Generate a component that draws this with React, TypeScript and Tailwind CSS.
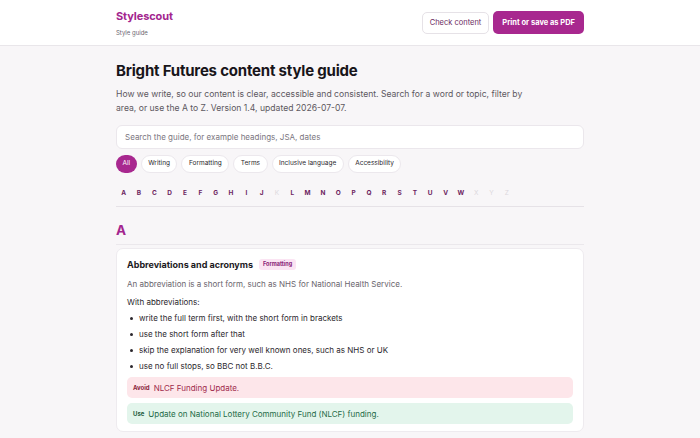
const FILTERS = ['All', 'Writing', 'Formatting', 'Terms', 'Inclusive language', 'Accessibility']
const LETTERS = 'ABCDEFGHIJKLMNOPQRSTUVWXYZ'.split('')
const EMPTY = ['K', 'X', 'Y', 'Z']

const RULES = [
  'write the full term first, with the short form in brackets',
  'use the short form after that',
  'skip the explanation for very well known ones, such as NHS or UK',
  'use no full stops, so BBC not B.B.C.',
]

export default function App() {
  return (
    <div className="min-h-[438px] bg-[#f8f6f8] text-[#1d1a1e]" style={{ fontFamily: 'Inter, "Noto Sans", sans-serif' }}>
      {/* Header */}
      <header className="bg-white border-b border-[#e9e6ea]">
        <div className="max-w-[468px] mx-auto h-[45px] flex items-center justify-between">
          <div className="flex flex-col">
            <span className="text-[11px] leading-[15px] font-bold text-[#a3258e] tracking-[-0.1px]">Stylescout</span>
            <span className="text-[6px] leading-[9px] text-[#6b6670] mt-[4px]">Style guide</span>
          </div>
          <div className="flex items-center gap-[4px]">
            <button className="h-[22px] px-[7px] rounded-[5px] bg-white border border-[#e6e2e7] text-[7.5px] text-[#6a2a5e]">
              Check content
            </button>
            <button className="h-[23px] px-[9px] rounded-[5px] bg-[#a8288f] text-[7.5px] font-bold text-white">
              Print or save as PDF
            </button>
          </div>
        </div>
      </header>

      <main className="max-w-[468px] mx-auto pt-[14px]">
        <h1 className="text-[15px] leading-[22px] font-bold text-[#18151a] tracking-[-0.2px]">
          Bright Futures content style guide
        </h1>
        <p className="mt-[5px] max-w-[412px] text-[8.6px] leading-[14px] text-[#5d5860]">
          How we write, so our content is clear, accessible and consistent. Search for a word or topic, filter by
          area, or use the A to Z. Version 1.4, updated 2026-07-07.
        </p>

        {/* Search */}
        <div className="mt-[10px] h-[24px] rounded-[6px] bg-white border border-[#ebe7ec] flex items-center px-[8px]">
          <span className="text-[8px] text-[#7b7680]">Search the guide, for example headings, JSA, dates</span>
        </div>

        {/* Filters */}
        <div className="mt-[6px] flex gap-[4px]">
          {FILTERS.map((f, i) => (
            <span
              key={f}
              className={`h-[18px] px-[6.5px] rounded-full flex items-center text-[6.5px] ${
                i === 0 ? 'bg-[#a8288f] text-white' : 'bg-white border border-[#ece8ed] text-[#2b272d]'
              }`}
            >
              {f}
            </span>
          ))}
        </div>

        {/* A to Z */}
        <div className="mt-[16px] flex pb-[7px] border-b border-[#e6e2e7]">
          {LETTERS.map((l) => (
            <span
              key={l}
              className={`w-[15.33px] text-center text-[6.5px] font-bold ${
                EMPTY.includes(l) ? 'text-[#dcd8dd] font-normal' : 'text-[#6d1f5f]'
              }`}
            >
              {l}
            </span>
          ))}
        </div>

        {/* Section A */}
        <h2 className="mt-[14px] text-[13.5px] leading-[18px] font-bold text-[#a3258e] pb-[5px] border-b border-[#ebe8ec]">A</h2>

        <div className="mt-[3px] bg-white rounded-[7px] border border-[#eeebef] px-[10px] pt-[9px] pb-[7px]">
          <div className="flex items-center gap-[6px]">
            <span className="text-[9px] font-bold text-[#1c191d]">Abbreviations and acronyms</span>
            <span className="h-[11px] px-[4px] rounded-[3px] bg-[#fbe4f3] text-[5.5px] font-bold text-[#8a2377] flex items-center">
              Formatting
            </span>
          </div>
          <p className="mt-[7px] text-[8px] leading-[12px] text-[#6a656d]">
            An abbreviation is a short form, such as NHS for National Health Service.
          </p>
          <p className="mt-[6px] text-[8px] leading-[12px] text-[#2b272d]">With abbreviations:</p>
          <ul className="mt-[4px] flex flex-col gap-[4px] pl-[3px]">
            {RULES.map((r) => (
              <li key={r} className="flex items-center gap-[6px] text-[8px] leading-[12px] text-[#2b272d]">
                <span className="w-[3px] h-[3px] rounded-full bg-[#2b272d]" />
                {r}
              </li>
            ))}
          </ul>
          <div className="mt-[5px] h-[21px] rounded-[5px] bg-[#fde6ea] flex items-center px-[6px] gap-[4px]">
            <span className="text-[6px] font-bold text-[#8a1f3b]">Avoid</span>
            <span className="text-[8px] text-[#a02a4c]">NLCF Funding Update.</span>
          </div>
          <div className="mt-[5px] h-[21px] rounded-[5px] bg-[#e3f5ec] flex items-center px-[6px] gap-[4px]">
            <span className="text-[6px] font-bold text-[#1e5a3c]">Use</span>
            <span className="text-[8px] text-[#236b47]">Update on National Lottery Community Fund (NLCF) funding.</span>
          </div>
        </div>
      </main>
    </div>
  )
}
